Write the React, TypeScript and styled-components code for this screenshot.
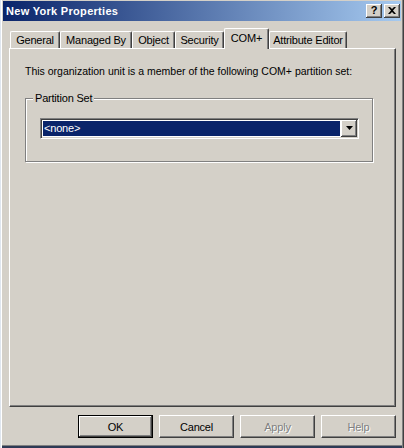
import React from "react";
import styled, { createGlobalStyle } from "styled-components";

const Global = createGlobalStyle`
  html, body { margin: 0; padding: 0; background: #d4d0c8; }
  body { font-family: "Liberation Sans", Arial, sans-serif; }
  * { box-sizing: border-box; }
`;

const FACE = "#d4d0c8";
const SHADOW = "#808080";
const DARK = "#404040";

const Window = styled.div`
  width: 404px;
  height: 448px;
  background: ${FACE};
  display: flex;
  flex-direction: column;
  padding: 1px 3px 3px 3px;
  box-shadow: inset 1px 0 0 #dfe6ef, inset 2px 0 0 #ffffff, inset -1px 0 0 ${DARK},
    inset -2px 0 0 ${SHADOW}, inset 0 -2px 0 #2e3a55, inset 0 -3px 0 ${SHADOW};
  font-family: "Liberation Sans", Arial, sans-serif;
  font-size: 11px;
  color: #000;
`;

const TitleBar = styled.div`
  height: 20px;
  display: flex;
  align-items: center;
  justify-content: space-between;
  padding: 0 1px 0 3px;
  background: linear-gradient(to right, #0a246a, #a6caf0);
`;

const Title = styled.span`
  color: #fff;
  font-weight: bold;
  font-size: 11px;
  letter-spacing: 0.3px;
`;

const CaptionButtons = styled.div`
  display: flex;
  gap: 2px;
`;

const CaptionButton = styled.div`
  width: 16px;
  height: 14px;
  background: ${FACE};
  display: flex;
  align-items: center;
  justify-content: center;
  box-shadow: inset -1px -1px 0 ${DARK}, inset 1px 1px 0 #fff, inset -2px -2px 0 ${SHADOW};
  font-weight: bold;
  font-size: 11px;
  line-height: 1;
  color: #000;
  padding-bottom: 1px;
`;

const Body = styled.div`
  flex: 1;
  display: flex;
  flex-direction: column;
  padding: 7px 5px 0 6px;
`;

const TabStrip = styled.div`
  height: 20px;
  display: flex;
  align-items: flex-end;
  padding-left: 1px;
  position: relative;
  z-index: 1;
`;

const Tab = styled.div<{ $w: number; $active?: boolean }>`
  width: ${(p) => p.$w}px;
  height: ${(p) => (p.$active ? 21 : 17)}px;
  margin-bottom: ${(p) => (p.$active ? -1 : 0)}px;
  align-self: ${(p) => (p.$active ? "flex-start" : "flex-end")};
  background: ${FACE};
  border-left: 1px solid #fff;
  border-top: 1px solid #fff;
  border-right: 1px solid ${DARK};
  border-top-left-radius: 2px;
  border-top-right-radius: 2px;
  box-shadow: inset -1px 0 0 ${SHADOW};
  display: flex;
  justify-content: center;
  padding-top: ${(p) => (p.$active ? 3 : 2)}px;
  font-size: 11px;
  letter-spacing: -0.2px;
  white-space: nowrap;
`;

const Panel = styled.div`
  height: 359px;
  background: ${FACE};
  border-top: 1px solid #fff;
  border-left: 1px solid #fff;
  border-right: 1px solid ${DARK};
  border-bottom: 1px solid ${DARK};
  box-shadow: inset -1px -1px 0 ${SHADOW};
  padding: 16px 0 0 15px;
  display: flex;
  flex-direction: column;
`;

const Intro = styled.div`
  font-size: 10.5px;
  line-height: 13px;
  white-space: nowrap;
`;

const Group = styled.div`
  position: relative;
  margin-top: 20px;
  width: 348px;
  height: 64px;
  border: 1px solid ${SHADOW};
  box-shadow: inset 1px 1px 0 #fff, 1px 1px 0 #fff;
  padding: 19px 13px 0 14px;
`;

const Legend = styled.span`
  position: absolute;
  top: -7px;
  left: 7px;
  padding: 0 2px;
  background: ${FACE};
  font-size: 11px;
  line-height: 13px;
  letter-spacing: -0.2px;
`;

const Combo = styled.div`
  width: 319px;
  height: 21px;
  display: flex;
  background: #fff;
  border-top: 1px solid ${SHADOW};
  border-left: 1px solid ${SHADOW};
  border-right: 1px solid #fff;
  border-bottom: 1px solid #fff;
  box-shadow: inset 1px 1px 0 ${DARK}, inset -1px -1px 0 ${FACE};
  padding: 1px;
`;

const ComboValue = styled.div`
  flex: 1;
  margin: 1px;
  background: #0a246a;
  color: #fff;
  font-size: 11px;
  line-height: 15px;
  padding-left: 1px;
  letter-spacing: -0.2px;
`;

const DropButton = styled.div`
  width: 16px;
  height: 17px;
  background: ${FACE};
  box-shadow: inset -1px -1px 0 ${DARK}, inset 1px 1px 0 #fff, inset -2px -2px 0 ${SHADOW};
  display: flex;
  align-items: center;
  justify-content: center;
  padding-bottom: 1px;
`;

const ButtonRow = styled.div`
  display: flex;
  justify-content: flex-end;
  gap: 6px;
  margin-top: 8px;
`;

const Button = styled.div<{ $default?: boolean; $disabled?: boolean }>`
  width: 75px;
  height: 23px;
  display: flex;
  align-items: center;
  justify-content: center;
  background: ${FACE};
  font-size: 11px;
  letter-spacing: -0.2px;
  color: ${(p) => (p.$disabled ? SHADOW : "#000")};
  text-shadow: ${(p) => (p.$disabled ? "1px 1px 0 #fff" : "none")};
  border: 1px solid ${(p) => (p.$default ? "#000" : FACE)};
  ${(p) =>
    p.$default
      ? `box-shadow: inset -1px -1px 0 ${DARK}, inset 1px 1px 0 #fff, inset -2px -2px 0 ${SHADOW};`
      : `border-top-color: #fff; border-left-color: #fff; border-right-color: ${DARK}; border-bottom-color: ${DARK}; box-shadow: inset -1px -1px 0 ${SHADOW};`}
`;

const tabs: { label: string; w: number; active?: boolean }[] = [
  { label: "General", w: 50 },
  { label: "Managed By", w: 72 },
  { label: "Object", w: 43 },
  { label: "Security", w: 49 },
  { label: "COM+", w: 45, active: true },
  { label: "Attribute Editor", w: 78 },
];

export default function App() {
  return (
    <>
      <Global />
      <Window>
        <TitleBar>
          <Title>New York Properties</Title>
          <CaptionButtons>
            <CaptionButton>?</CaptionButton>
            <CaptionButton>
              <svg width="8" height="7" viewBox="0 0 8 7">
                <path d="M0 0h2l2 2 2-2h2L5 3.5 8 7H6L4 5 2 7H0l3-3.5z" fill="#000" />
              </svg>
            </CaptionButton>
          </CaptionButtons>
        </TitleBar>
        <Body>
          <TabStrip>
            {tabs.map((t) => (
              <Tab key={t.label} $w={t.w} $active={t.active}>
                {t.label}
              </Tab>
            ))}
          </TabStrip>
          <Panel>
            <Intro>This organization unit is a member of the following COM+ partition set:</Intro>
            <Group>
              <Legend>Partition Set</Legend>
              <Combo>
                <ComboValue>&lt;none&gt;</ComboValue>
                <DropButton>
                  <svg width="7" height="4" viewBox="0 0 7 4">
                    <path d="M0 0h7L3.5 4z" fill="#000" />
                  </svg>
                </DropButton>
              </Combo>
            </Group>
          </Panel>
          <ButtonRow>
            <Button $default>OK</Button>
            <Button>Cancel</Button>
            <Button $disabled>Apply</Button>
            <Button $disabled>Help</Button>
          </ButtonRow>
        </Body>
      </Window>
    </>
  );
}
